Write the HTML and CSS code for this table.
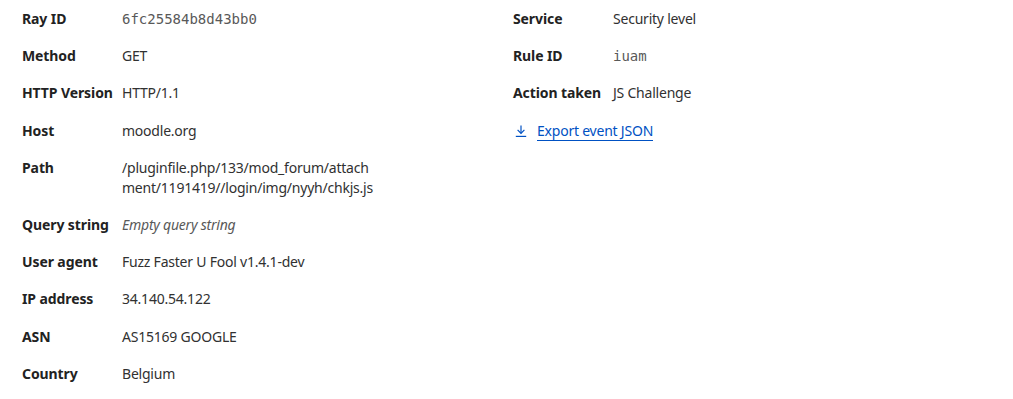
FILE: index.html
```html
<!DOCTYPE html>
<html>
<head>
<meta charset="utf-8">
<link rel="stylesheet" href="styles.css">
</head>
<body>
<div class="page">
  <dl class="col col-left">
    <div class="row"><dt>Ray ID</dt><dd class="mono">6fc25584b8d43bb0</dd></div>
    <div class="row"><dt>Method</dt><dd>GET</dd></div>
    <div class="row"><dt>HTTP Version</dt><dd>HTTP/1.1</dd></div>
    <div class="row"><dt>Host</dt><dd>moodle.org</dd></div>
    <div class="row"><dt>Path</dt><dd class="wrap">/pluginfile.php/133/mod_forum/attachment/1191419//login/img/nyyh/chkjs.js</dd></div>
    <div class="row"><dt>Query string</dt><dd class="empty">Empty query string</dd></div>
    <div class="row"><dt>User agent</dt><dd>Fuzz Faster U Fool v1.4.1-dev</dd></div>
    <div class="row"><dt>IP address</dt><dd>34.140.54.122</dd></div>
    <div class="row"><dt>ASN</dt><dd>AS15169 GOOGLE</dd></div>
    <div class="row"><dt>Country</dt><dd>Belgium</dd></div>
  </dl>
  <div class="col col-right">
    <dl class="list">
      <div class="row"><dt>Service</dt><dd>Security level</dd></div>
      <div class="row"><dt>Rule ID</dt><dd class="mono">iuam</dd></div>
      <div class="row"><dt>Action taken</dt><dd>JS Challenge</dd></div>
    </dl>
    <a class="export" href="#">
      <svg class="icon" width="12" height="12" viewBox="0 0 12 12" fill="none" stroke="#0051c3" stroke-width="1.2">
        <path d="M6 0.5V8.2"/>
        <path d="M2.6 4.9L6 8.3L9.4 4.9"/>
        <path d="M0.8 11.4H11.2"/>
      </svg>
      <span class="label">Export event JSON</span>
    </a>
  </div>
</div>
</body>
</html>
```

FILE: styles.css
```css
html, body {
  margin: 0;
  padding: 0;
  background: #ffffff;
}

body {
  font-family: "Noto Sans", "Open Sans", sans-serif;
  font-size: 14px;
  line-height: 20px;
  color: #313131;
  letter-spacing: -0.22px;
}

.page {
  display: flex;
  padding: 9px 22px 0 22px;
}

.col {
  margin: 0;
  padding: 0;
}

.col-left {
  width: 491px;
}

.list {
  margin: 0;
  padding: 0;
}

.row {
  display: flex;
  margin-bottom: 17.2px;
}

dt {
  width: 100px;
  flex: none;
  font-weight: 700;
  color: #222222;
  letter-spacing: -0.1px;
}

dd {
  margin: 0;
}

.mono {
  font-family: "DejaVu Sans Mono", monospace;
  color: #595959;
  letter-spacing: 0;
}

.wrap {
  width: 254px;
  word-break: break-all;
}

.empty {
  font-style: italic;
  color: #595959;
}

.export {
  display: inline-flex;
  align-items: center;
  gap: 10px;
  margin-left: 2px;
  color: #0051c3;
  text-decoration: none;
}

.export .icon {
  display: block;
}

.export .label {
  border-bottom: 1px solid #0051c3;
  line-height: 19px;
}
```
